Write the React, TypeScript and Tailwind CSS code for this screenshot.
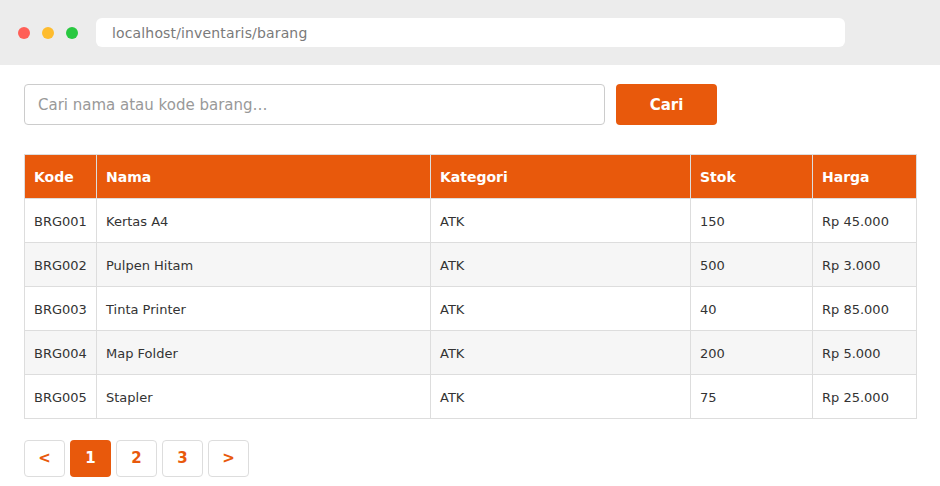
const rows = [
  ["BRG001", "Kertas A4", "ATK", "150", "Rp 45.000"],
  ["BRG002", "Pulpen Hitam", "ATK", "500", "Rp 3.000"],
  ["BRG003", "Tinta Printer", "ATK", "40", "Rp 85.000"],
  ["BRG004", "Map Folder", "ATK", "200", "Rp 5.000"],
  ["BRG005", "Stapler", "ATK", "75", "Rp 25.000"],
];

const App = () => (
  <div className="min-h-[486px] bg-white font-['DejaVu_Sans',sans-serif]">
    <div className="h-[65px] bg-[#ececec] flex items-center px-[18px]">
      <div className="flex items-center gap-[12px]">
        <span className="w-[12px] h-[12px] rounded-full bg-[#ff5f57]" />
        <span className="w-[12px] h-[12px] rounded-full bg-[#febc2e]" />
        <span className="w-[12px] h-[12px] rounded-full bg-[#28c840]" />
      </div>
      <div className="ml-[18px] w-[749px] h-[29px] bg-white rounded-[6px] flex items-center px-[16px] pt-[1px] text-[14px] tracking-[0.15px] text-[#7a7a7a]">
        localhost/inventaris/barang
      </div>
    </div>

    <div className="px-[24px] pt-[19px]">
      <div className="flex gap-[11px]">
        <input
          className="w-[581px] h-[41px] border border-[#ccc] rounded-[4px] px-[13px] text-[15px] text-[#333] placeholder:text-[#999] outline-none"
          placeholder="Cari nama atau kode barang…"
        />
        <button className="w-[101px] h-[41px] bg-[#e8590c] text-white font-bold text-[15px] rounded-[4px] pt-[1px]">
          Cari
        </button>
      </div>

      <table className="mt-[29px] w-[892px] table-fixed border-collapse text-[13px] text-[#333]">
        <colgroup>
          <col className="w-[72px]" />
          <col className="w-[334px]" />
          <col className="w-[260px]" />
          <col className="w-[122px]" />
          <col className="w-[104px]" />
        </colgroup>
        <thead>
          <tr className="bg-[#e8590c] text-white h-[44px]">
            {["Kode", "Nama", "Kategori", "Stok", "Harga"].map(h => (
              <th key={h} className="border border-[#ddd] px-[9px] pt-[2px] text-left text-[14px] font-bold">{h}</th>
            ))}
          </tr>
        </thead>
        <tbody>
          {rows.map((r, i) => (
            <tr key={r[0]} className={`h-[44px] ${i % 2 === 1 ? "bg-[#f6f6f6]" : "bg-white"}`}>
              {r.map((c, j) => (
                <td key={j} className="border border-[#ddd] px-[9px] pt-[2px]">{c}</td>
              ))}
            </tr>
          ))}
        </tbody>
      </table>

      <div className="mt-[21px] flex gap-[5px]">
        {["<", "1", "2", "3", ">"].map(p => (
          <button
            key={p}
            className={`w-[41px] h-[37px] rounded-[4px] text-[15px] font-bold ${p === "1" ? "bg-[#e8590c] text-white" : "bg-white text-[#e8590c] border border-[#ddd]"}`}
          >
            {p}
          </button>
        ))}
      </div>
    </div>
  </div>
);

export default App;
